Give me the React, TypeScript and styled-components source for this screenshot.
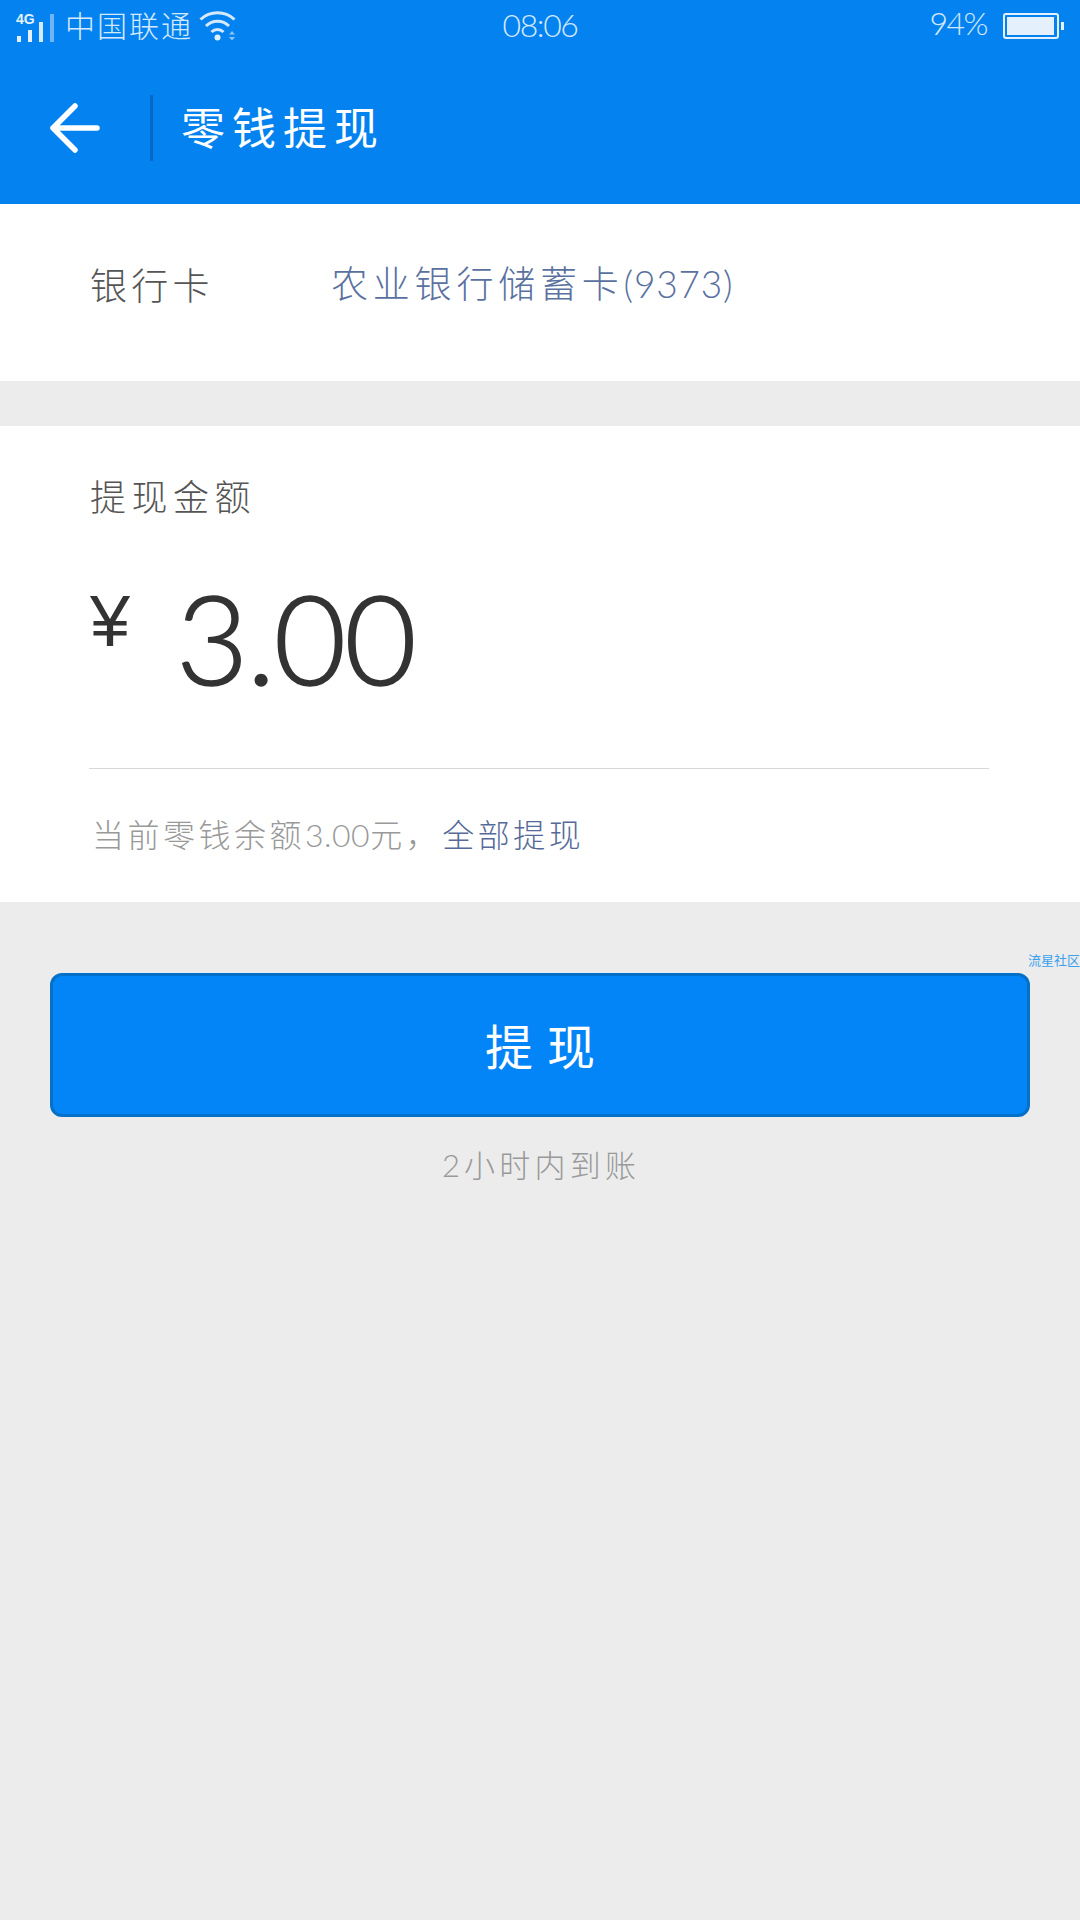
import React from 'react';
import styled, { createGlobalStyle } from 'styled-components';

const CJK = '"Noto Sans CJK SC"';

const GlobalStyle = createGlobalStyle`
  html, body {
    margin: 0;
    padding: 0;
    background: #ececec;
  }
  body {
    font-family: "Lato", ${CJK}, sans-serif;
  }
`;

const SignalIcon = () => (
  <svg width="38" height="34" viewBox="0 0 38 34">
    <text x="0" y="15" fontFamily="Liberation Sans" fontWeight="700" fontSize="14" fill="#e4f1fd">
      4G
    </text>
    <rect x="1" y="27" width="4" height="6" fill="#e4f1fd" />
    <rect x="12" y="21" width="4" height="12" fill="#e4f1fd" />
    <rect x="23" y="13" width="4" height="20" fill="#d5e9fc" />
    <rect x="34" y="5" width="4" height="28" fill="#6db5f4" />
  </svg>
);

const WifiIcon = () => (
  <svg width="38" height="32" viewBox="0 0 38 32" fill="none">
    <path d="M1.5 9.5C11 0.5 26 0.5 35.5 9.5" stroke="#d5e9fc" strokeWidth="3" />
    <path d="M7 16C13.5 9.5 23.5 9.5 30 16" stroke="#d5e9fc" strokeWidth="3" />
    <path d="M12.5 22C16 18.5 21 18.5 24.5 22" stroke="#d5e9fc" strokeWidth="3" />
    <circle cx="18.5" cy="27.5" r="3" fill="#e4f1fd" />
    <path d="M30 24.5l3-3.5 3 3.5z M30 27l3 3.5 3-3.5z" fill="#8cc4f6" />
  </svg>
);

const BackIcon = () => (
  <svg width="50" height="50" viewBox="0 0 50 50" fill="none">
    <path
      d="M47 25H3M25 3L3 25l22 22"
      stroke="#ffffff"
      strokeWidth="5.5"
      strokeLinecap="round"
      strokeLinejoin="round"
    />
  </svg>
);

const App = () => (
  <Page>
    <GlobalStyle />
    <TopBlue>
      <StatusBar>
        <StatusLeft>
          <SignalIcon />
          <Carrier>中国联通</Carrier>
          <WifiIcon />
        </StatusLeft>
        <Clock>08:06</Clock>
        <StatusRight>
          <Percent>94%</Percent>
          <Battery>
            <BatteryFill />
          </Battery>
          <BatteryNub />
        </StatusRight>
      </StatusBar>
      <NavBar>
        <BackIcon />
        <NavDivider />
        <NavTitle>零钱提现</NavTitle>
      </NavBar>
    </TopBlue>

    <CardRow>
      <RowLabel>银行卡</RowLabel>
      <CardName>
        农业银行储蓄卡<Digits $spacing={0.8}>(9373)</Digits>
      </CardName>
    </CardRow>

    <AmountPanel>
      <AmountLabel>提现金额</AmountLabel>
      <AmountLine>
        <Yen>¥</Yen>
        <Amount>3.00</Amount>
      </AmountLine>
      <Divider />
      <Hint>
        当前零钱余额<Digits $spacing={0.5}>3.00</Digits>元，<HintLink>全部提现</HintLink>
      </Hint>
    </AmountPanel>

    <Footer>
      <Watermark>流星社区</Watermark>
      <SubmitButton>提现</SubmitButton>
      <Arrival>2小时内到账</Arrival>
    </Footer>
  </Page>
);

export default App;

const Page = styled.div`
  width: 1080px;
  height: 1920px;
  overflow: hidden;
  background: #ececec;
`;

const TopBlue = styled.div`
  background: #0483f0;
  height: 204px;
`;

const StatusBar = styled.div`
  display: grid;
  grid-template-columns: 1fr auto 1fr;
  align-items: center;
  height: 52px;
  color: #d5e9fc;
`;

const StatusLeft = styled.div`
  display: flex;
  align-items: center;
  padding-left: 16px;
  gap: 6px;
`;

const Carrier = styled.span`
  margin-left: 5px;
  font-family: ${CJK}, sans-serif;
  font-weight: 300;
  font-size: 30px;
  letter-spacing: 2px;
  line-height: 40px;
  position: relative;
  top: -2px;
`;

const Clock = styled.span`
  font-weight: 300;
  font-size: 32px;
  letter-spacing: -1.4px;
  line-height: 40px;
  position: relative;
  top: -1px;
`;

const StatusRight = styled.div`
  display: flex;
  align-items: center;
  justify-content: flex-end;
  padding-right: 16px;
`;

const Percent = styled.span`
  font-weight: 300;
  font-size: 32px;
  letter-spacing: -1.5px;
  line-height: 40px;
  margin-right: 16px;
  position: relative;
  top: -3px;
`;

const Battery = styled.div`
  box-sizing: border-box;
  width: 56px;
  height: 26px;
  border: 2px solid #e4f1fd;
  border-radius: 3px;
  padding: 2px;
`;

const BatteryFill = styled.div`
  width: 47px;
  height: 100%;
  background: #e4f1fd;
`;

const BatteryNub = styled.div`
  width: 3px;
  height: 8px;
  margin-left: 2px;
  background: #e4f1fd;
`;

const NavBar = styled.div`
  display: flex;
  align-items: center;
  height: 152px;
  padding-left: 50px;
`;

const NavDivider = styled.div`
  width: 3px;
  height: 66px;
  margin-left: 50px;
  margin-right: 28px;
  background: #0568c4;
`;

const NavTitle = styled.h1`
  margin: 0 0 4px;
  font-family: ${CJK}, sans-serif;
  font-weight: 400;
  font-size: 44px;
  letter-spacing: 7px;
  color: #ffffff;
`;

const CardRow = styled.div`
  display: flex;
  align-items: flex-start;
  height: 177px;
  padding: 52px 0 0 90px;
  box-sizing: border-box;
  background: #ffffff;
`;

const RowLabel = styled.span`
  width: 241px;
  font-family: ${CJK}, sans-serif;
  font-weight: 300;
  font-size: 37px;
  letter-spacing: 4.3px;
  line-height: 56px;
  color: #555555;
`;

const CardName = styled.span`
  font-weight: 300;
  font-size: 37px;
  letter-spacing: 4.8px;
  line-height: 56px;
  color: #5a719f;
`;

const Digits = styled.span<{ $spacing: number }>`
  letter-spacing: ${(p) => p.$spacing}px;
`;

const AmountPanel = styled.div`
  margin-top: 45px;
  height: 476px;
  padding: 44px 91px 0 89px;
  box-sizing: border-box;
  background: #ffffff;
`;

const AmountLabel = styled.div`
  margin-left: 1px;
  font-family: ${CJK}, sans-serif;
  font-weight: 300;
  font-size: 36px;
  letter-spacing: 5.5px;
  line-height: 50px;
  color: #555555;
`;

const AmountLine = styled.div`
  display: flex;
  align-items: flex-start;
  height: 199px;
  margin-top: 49px;
`;

const Yen = styled.span`
  width: 86px;
  margin: 14px 0 0 1px;
  font-family: "Liberation Sans", sans-serif;
  font-size: 72px;
  line-height: 76px;
  color: #333333;
`;

const Amount = styled.span`
  font-weight: 300;
  font-size: 125px;
  letter-spacing: -2px;
  line-height: 136px;
  color: #333333;
  -webkit-text-stroke: 1.5px #333333;
`;

const Divider = styled.div`
  height: 1px;
  background: #d8d8d8;
`;

const Hint = styled.div`
  margin-top: 42px;
  padding-left: 3px;
  font-weight: 300;
  font-size: 32px;
  letter-spacing: 3.5px;
  line-height: 48px;
  color: #999999;
`;

const HintLink = styled.span`
  margin-left: 1px;
  color: #556a98;
`;

const Footer = styled.div`
  position: relative;
  padding: 71px 50px 0;
  display: flex;
  flex-direction: column;
  align-items: center;
`;

const Watermark = styled.span`
  position: absolute;
  top: 49px;
  right: 0;
  font-family: ${CJK}, sans-serif;
  font-size: 13px;
  line-height: 18px;
  color: #3aa0ee;
`;

const SubmitButton = styled.button`
  width: 100%;
  height: 144px;
  box-sizing: border-box;
  border: 3px solid #0570c8;
  border-radius: 12px;
  background: #0385f8;
  color: #ffffff;
  font-family: ${CJK}, sans-serif;
  font-weight: 400;
  font-size: 48px;
  letter-spacing: 14px;
  text-indent: 14px;
  padding-bottom: 4px;
`;

const Arrival = styled.div`
  margin-top: 26px;
  padding-left: 2px;
  font-weight: 300;
  font-size: 31px;
  letter-spacing: 4.2px;
  line-height: 44px;
  color: #999999;
`;
